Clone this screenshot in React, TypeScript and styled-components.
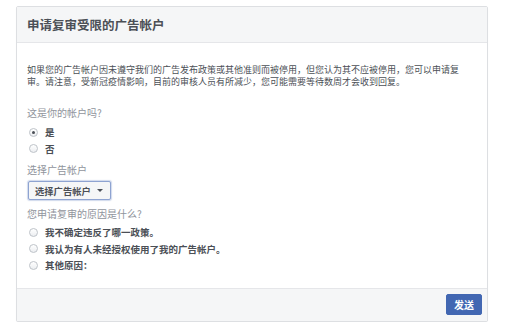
import React, { useState } from 'react';
import styled, { createGlobalStyle } from 'styled-components';

const GlobalStyle = createGlobalStyle`
  html, body {
    margin: 0;
    padding: 0;
    background: #fff;
  }
  body {
    font-family: "Noto Sans CJK SC", "Liberation Sans", sans-serif;
    color: #4b4f56;
  }
`;

const reasons = [
  '我不确定违反了哪一政策。',
  '我认为有人未经授权使用了我的广告帐户。',
  '其他原因：',
];

export default function App() {
  const [mine, setMine] = useState('yes');
  const [reason, setReason] = useState<number | null>(null);

  return (
    <Page>
      <GlobalStyle />
      <Card>
        <Header>
          <Title>申请复审受限的广告帐户</Title>
        </Header>
        <Body>
          <Intro>
            如果您的广告帐户因未遵守我们的广告发布政策或其他准则而被停用，但您认为其不应被停用，您可以申请复审。请注意，受新冠疫情影响，目前的审核人员有所减少，您可能需要等待数周才会收到回复。
          </Intro>

          <Question>这是你的帐户吗?</Question>
          <RadioList $gap={4}>
            <RadioRow onClick={() => setMine('yes')}>
              <RadioDot $checked={mine === 'yes'} />
              <RadioLabel>是</RadioLabel>
            </RadioRow>
            <RadioRow onClick={() => setMine('no')}>
              <RadioDot $checked={mine === 'no'} />
              <RadioLabel>否</RadioLabel>
            </RadioRow>
          </RadioList>

          <Question $top={6}>选择广告帐户</Question>
          <SelectButton type="button">
            选择广告帐户
            <Caret />
          </SelectButton>

          <Question $top={7}>您申请复审的原因是什么?</Question>
          <RadioList $gap={3}>
            {reasons.map((r, i) => (
              <RadioRow key={r} onClick={() => setReason(i)}>
                <RadioDot $checked={reason === i} />
                <RadioLabel>{r}</RadioLabel>
              </RadioRow>
            ))}
          </RadioList>
        </Body>
        <Footer>
          <SendButton type="button">发送</SendButton>
        </Footer>
      </Card>
    </Page>
  );
}

const Page = styled.div`
  padding: 6px 0 0 16px;
`;

const Card = styled.div`
  width: 472px;
  box-sizing: border-box;
  border: 1px solid #dddfe2;
  border-radius: 2px;
  background: #fff;
  box-shadow: 0 1px 1px rgba(0, 0, 0, 0.04);
`;

const Header = styled.div`
  height: 36px;
  box-sizing: border-box;
  display: flex;
  align-items: center;
  padding: 0 10px;
  background: #f5f6f7;
  border-bottom: 1px solid #e5e6e9;
`;

const Title = styled.h1`
  margin: 0;
  font-size: 12.5px;
  font-weight: 700;
  color: #4b4f56;
  line-height: 16px;
`;

const Body = styled.div`
  padding: 21px 10px 14px 10px;
  display: flex;
  flex-direction: column;
  align-items: flex-start;
`;

const Intro = styled.p`
  margin: 0;
  width: 445px;
  font-size: 9px;
  line-height: 11.5px;
  color: #4b4f56;
`;

const Question = styled.div<{ $top?: number }>`
  margin-top: ${p => p.$top ?? 19}px;
  font-size: 10px;
  line-height: 14px;
  color: #90949c;
`;

const RadioList = styled.div<{ $gap: number }>`
  margin-top: ${p => p.$gap}px;
  display: flex;
  flex-direction: column;
`;

const RadioRow = styled.label`
  display: flex;
  align-items: center;
  height: 16.5px;
  padding-left: 2px;
  cursor: pointer;
`;

const RadioDot = styled.span<{ $checked: boolean }>`
  width: 9px;
  height: 9px;
  box-sizing: border-box;
  border-radius: 50%;
  border: 1px solid #bec3c9;
  background: linear-gradient(#fff, #eceef1);
  display: flex;
  align-items: center;
  justify-content: center;
  margin-right: 7px;

  &::after {
    content: '';
    width: 3px;
    height: 3px;
    border-radius: 50%;
    background: ${p => (p.$checked ? '#4b4f56' : 'transparent')};
  }
`;

const RadioLabel = styled.span`
  font-size: 9.5px;
  font-weight: 700;
  color: #4b4f56;
  line-height: 14px;
`;

const SelectButton = styled.button`
  margin-top: 4px;
  margin-left: 1px;
  height: 19px;
  box-sizing: border-box;
  display: flex;
  align-items: center;
  gap: 6px;
  padding: 0 7px 0 6px;
  background: #f5f6f7;
  border: 1px solid #8ea3d1;
  border-radius: 2px;
  box-shadow: 0 0 1px 1px rgba(66, 103, 178, 0.25);
  font-family: "Noto Sans CJK SC", "Liberation Sans", sans-serif;
  font-size: 9.3px;
  font-weight: 700;
  color: #4b4f56;
  cursor: pointer;
`;

const Caret = styled.span`
  width: 0;
  height: 0;
  border-left: 3px solid transparent;
  border-right: 3px solid transparent;
  border-top: 3px solid #4b4f56;
`;

const Footer = styled.div`
  height: 33px;
  box-sizing: border-box;
  display: flex;
  align-items: center;
  justify-content: flex-end;
  padding: 0 5px;
  background: #f5f6f7;
  border-top: 1px solid #e5e6e9;
`;

const SendButton = styled.button`
  width: 36px;
  height: 21px;
  border: 1px solid #4267b2;
  border-radius: 2px;
  background: #4267b2;
  color: #fff;
  font-family: "Noto Sans CJK SC", "Liberation Sans", sans-serif;
  font-size: 10px;
  font-weight: 700;
  padding: 0;
  cursor: pointer;
`;
